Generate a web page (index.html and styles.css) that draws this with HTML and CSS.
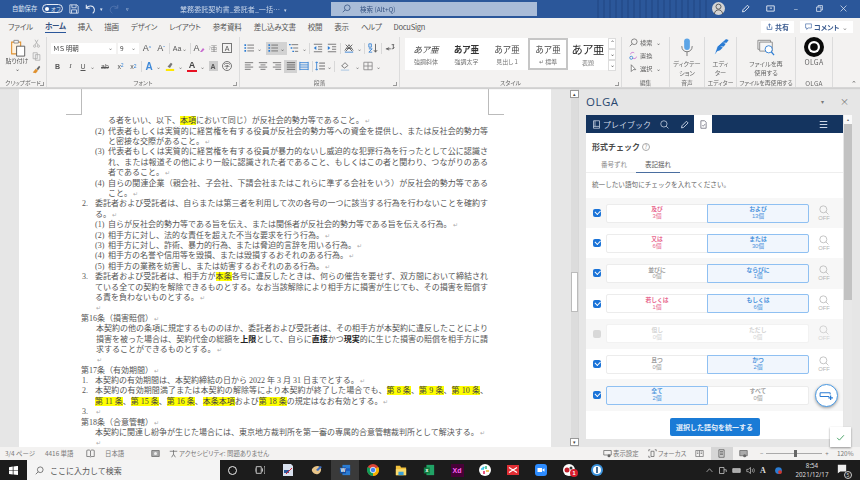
FILE: index.html
```html
<!DOCTYPE html>
<html lang="ja">
<head>
<meta charset="utf-8">
<title>業務委託契約書</title>
<link rel="stylesheet" href="styles.css">
</head>
<body>
<svg class="defs" aria-hidden="true">
  <symbol id="mag" viewBox="0 0 12 12"><circle cx="7" cy="5" r="3.8" fill="none" stroke="currentColor"/><path d="M4.2 7.8 1 11" stroke="currentColor" fill="none"/></symbol>
  <symbol id="magr" viewBox="0 0 12 12"><circle cx="5.2" cy="5.2" r="4.2" fill="none" stroke="currentColor"/><path d="M8.200 8.200 11.300 11.300" stroke="currentColor" fill="none"/></symbol>
  <symbol id="bul" viewBox="0 0 12 12"><path d="M4 2.5h8M4 6h8M4 9.500h8" stroke="#666"/><path d="M.5 2.500h2M.5 6h2M.5 9.500h2" stroke="#2b7cd3" stroke-width="2"/></symbol>
  <symbol id="mlv" viewBox="0 0 12 12"><path d="M3 2h8M5 6h6M7 10h4" stroke="#666"/><path d="M0 2h2M2 6h2M4 10h2" stroke="#2b7cd3" stroke-width="1.600"/></symbol>
  <symbol id="indl" viewBox="0 0 12 12"><path d="M1 1.500h10M6 4.500h5M6 7.500h5M1 10.500h10" stroke="#666"/><path d="M4 3.500 1 6l3 2.500z" fill="#2b7cd3"/></symbol>
  <symbol id="indr" viewBox="0 0 12 12"><path d="M1 1.500h10M6 4.500h5M6 7.500h5M1 10.500h10" stroke="#666"/><path d="M1 3.500 4 6 1 8.500z" fill="#2b7cd3"/></symbol>
  <symbol id="al" viewBox="0 0 12 12"><path d="M1 2h10M1 4.700h7M1 7.300h10M1 10h7" stroke="#666"/></symbol>
  <symbol id="ac" viewBox="0 0 12 12"><path d="M1 2h10M3 4.700h6M1 7.300h10M3 10h6" stroke="#666"/></symbol>
  <symbol id="ar" viewBox="0 0 12 12"><path d="M1 2h10M4 4.700h7M1 7.300h10M4 10h7" stroke="#666"/></symbol>
  <symbol id="aj" viewBox="0 0 12 12"><path d="M1 2h10M1 4.700h10M1 7.300h10M1 10h10" stroke="#555"/></symbol>
  <symbol id="ad" viewBox="0 0 12 12"><path d="M1 2h10M1 4.700h10M1 7.300h10M1 10h10M1 1v10M11 1v10" stroke="#2b7cd3"/></symbol>
  <symbol id="doc" viewBox="0 0 12 12"><path d="M2.500 1h5l2 2v8h-7zM4.500 7l1.200 1.300L8 5.500" fill="none" stroke="currentColor"/></symbol>
  <symbol id="pen" viewBox="0 0 12 12"><path d="M2 10.500l.6-2.800 6-6 2.200 2.200-6 6z" fill="none" stroke="currentColor" stroke-width="1.200"/></symbol>
</svg>

<div class="screen">
  <header class="titlebar">
    <div class="tb-left">
      <span class="tb-auto">自動保存</span>
      <span class="toggle"><i class="knob"></i><b>オフ</b></span>
      <svg class="ic10" viewBox="0 0 12 12"><path d="M1 1h8.500L11 2.500V11H1zM3.500 1v3.500h5V1M3 11V7h6v4" fill="none" stroke="#dfe6f2"/></svg>
      <svg class="ic12" viewBox="0 0 14 12"><path d="M1.500 1v4h4M1.500 5C4 1.500 10 1.500 11 6.500c.3 1.800-.8 3.500-2 4.500" fill="none" stroke="#e6ecf6" stroke-width="1.200"/></svg>
      <span class="tb-caret">▾</span>
      <svg class="ic10 dim" viewBox="0 0 12 12"><path d="M10.500 1v4h-4M10.500 5C8 1.500 2 2 1.500 6.500c-.2 2 1 3.500 2.500 4.500" fill="none" stroke="#5d7db5" stroke-width="1.200"/></svg>
      <span class="tb-custom">▿</span>
    </div>
    <div class="tb-title">業務委託契約書_委託者_一括… <small>▾</small></div>
    <div class="tb-search"><svg class="ic9" viewBox="0 0 12 12"><use href="#mag"/></svg><span>検索 (Alt+Q)</span></div>
    <div class="tb-right">
      <span class="avatar"><svg viewBox="0 0 14 14"><circle cx="7" cy="5" r="2.700" fill="none" stroke="#555"/><path d="M2.500 13c.5-3.500 2.500-4.500 4.500-4.500s4 1 4.500 4.500" fill="none" stroke="#555"/></svg></span>
      <svg class="ic9 wh" viewBox="0 0 12 12"><use href="#pen"/></svg>
      <svg class="ic9 wh" viewBox="0 0 12 12"><path d="M1 2.500h10v7H1zM5 5.500h3" fill="none" stroke="currentColor" stroke-width="1.200"/></svg>
      <span class="winbtn">–</span>
      <svg class="ic7 wh" viewBox="0 0 12 12"><path d="M1 3.500h7.500V11H1zM3.500 3.500V1H11v7.500H8.500" fill="none" stroke="currentColor" stroke-width="1.300"/></svg>
      <svg class="ic7 wh" viewBox="0 0 12 12"><path d="M1 1l10 10M11 1 1 11" stroke="currentColor" stroke-width="1.200"/></svg>
    </div>
  </header>

  <nav class="tabs">
    <span class="tab t-file">ファイル</span>
    <span class="tab active">ホーム</span>
    <span class="tab">挿入</span>
    <span class="tab">描画</span>
    <span class="tab">デザイン</span>
    <span class="tab">レイアウト</span>
    <span class="tab">参考資料</span>
    <span class="tab">差し込み文書</span>
    <span class="tab">校閲</span>
    <span class="tab">表示</span>
    <span class="tab">ヘルプ</span>
    <span class="tab">DocuSign</span>
    <span class="tabs-right">
      <span class="chip chip-share"><svg class="ic7" viewBox="0 0 12 12"><path d="M2 6v5h8V6M6 8V1.500M3.500 4 6 1.500 8.500 4" fill="none" stroke="#2b579a" stroke-width="1.200"/></svg>共有</span>
      <span class="chip chip-comment"><svg class="ic7" viewBox="0 0 12 12"><path d="M1 1.500h10v7H5L3 11V8.500H1z" fill="none" stroke="#2b579a"/></svg>コメント<em>⌄</em></span>
    </span>
  </nav>

  <section class="ribbon">
    <div class="rg rg-clip">
      <div class="rg-body clip-body">
        <div class="paste">
          <svg viewBox="0 0 18 20"><path d="M2.500 3.500h10v13h-10z" fill="#fff3e0" stroke="#e0912f" stroke-width="1.200"/><path d="M5 1.500h5v3H5z" fill="#f6f6f6" stroke="#888"/><path d="M8 8h9v11H8z" fill="#fff" stroke="#555"/></svg>
          <span>貼り付け</span><small>⌄</small>
        </div>
        <div class="clip-tools">
          <svg viewBox="0 0 12 12"><path d="M4 1l4 7M8 1 4 8" stroke="#aaa"/><circle cx="3.500" cy="9.500" r="1.500" fill="none" stroke="#aaa"/><circle cx="8.500" cy="9.500" r="1.500" fill="none" stroke="#aaa"/></svg>
          <svg viewBox="0 0 12 12"><path d="M1.500 1h5.500v8h-5.500zM4.500 3.500h6V11h-6z" fill="#f2f2f2" stroke="#aaa"/></svg>
          <svg viewBox="0 0 12 12"><path d="M1 10l4-5 3 2.500L5 11z" fill="#e0912f"/><path d="M6 5l3.500-4 1.500 1.500L8 7z" fill="#666"/></svg>
        </div>
      </div>
      <div class="rg-label">クリップボード<i class="launch"></i></div>
    </div>

    <div class="rg rg-font">
      <div class="rg-body">
        <div class="row">
          <span class="field f-name">ＭＳ 明朝<em>⌄</em></span>
          <span class="field f-size">9<em>⌄</em></span>
          <span class="ib w14 big">A<sup>^</sup></span>
          <span class="ib w14 big">A<sup>ˇ</sup></span>
          <i class="sep"></i>
          <span class="ib w18">Aa<small>⌄</small></span>
          <i class="sep"></i>
          <span class="ib w14 big">A<svg class="mini" viewBox="0 0 6 6"><path d="M1 5l3-4 1.500 1.500L3 5z" fill="#c86bd0"/></svg></span>
          <span class="ib w14 ruby"><small>ｱ</small>亜</span>
          <span class="ib w14"><b class="boxa">A</b></span>
        </div>
        <div class="row r2">
          <span class="ib w13 bold">B</span>
          <span class="ib w13 ital">I</span>
          <span class="ib w12 und">U</span>
          <span class="ib w7 car">⌄</span>
          <span class="ib w18 strike">ab</span>
          <span class="ib w13">x<sub>2</sub></span>
          <span class="ib w13">x<sup>2</sup></span>
          <i class="sep"></i>
          <span class="ib w12 abig blue">A</span>
          <span class="ib w7 car">⌄</span>
          <span class="ib w15"><svg class="ic10" viewBox="0 0 12 12"><path d="M3 7l4-5 2 1.500L6 8.500z" fill="#777"/><path d="M1 9.500h10V12H1z" fill="#ffe800"/></svg></span>
          <span class="ib w7 car">⌄</span>
          <span class="ib redline">A</span>
          <span class="ib w7 car">⌄</span>
          <span class="ib w14"><b class="shade">A</b></span>
          <span class="ib w14"><b class="circa">字</b></span>
        </div>
      </div>
      <div class="rg-label">フォント<i class="launch"></i></div>
    </div>

    <div class="rg rg-para">
      <div class="rg-body">
        <div class="row">
          <span class="ib w14"><svg class="ic10" viewBox="0 0 12 12"><use href="#bul"/></svg></span><span class="ib w7 car">⌄</span>
          <span class="selbox"><svg class="ic10" viewBox="0 0 12 12"><use href="#bul"/></svg><small>⌄</small></span>
          <span class="ib w14"><svg class="ic10" viewBox="0 0 12 12"><use href="#mlv"/></svg></span><span class="ib w7 car">⌄</span>
          <i class="sep"></i>
          <span class="ib w14"><svg class="ic10" viewBox="0 0 12 12"><use href="#indl"/></svg></span>
          <span class="ib w14"><svg class="ic10" viewBox="0 0 12 12"><use href="#indr"/></svg></span>
          <i class="sep"></i>
          <span class="ib w14"><svg class="ic10" viewBox="0 0 12 12"><path d="M1 9 6 2l5 7M3 6.500h6M2 2l8 8M10 2l-8 8" fill="none" stroke="#555"/><path d="M1 11h10" stroke="#2b7cd3"/></svg></span><span class="ib w7 car">⌄</span>
          <i class="sep"></i>
          <span class="ib w14"><svg class="ic10" viewBox="0 0 12 12"><path d="M1 1h3v4H1zM1 7h4L1 11h4" fill="none" stroke="#2b7cd3"/><path d="M9 1v10M7 8.500 9 11l2-2.500" fill="none" stroke="#555"/></svg></span>
          <i class="sep"></i>
          <span class="ib w14"><svg class="ic10" viewBox="0 0 12 12"><path d="M1 7h6M10 2v5M8 2h3M5 5.500 2 7l3 1.500M8 7c2 0 3-1 3-2" fill="none" stroke="#555"/></svg></span>
        </div>
        <div class="row r2">
          <span class="ib w14"><svg class="ic10" viewBox="0 0 12 12"><use href="#al"/></svg></span>
          <span class="ib w14"><svg class="ic10" viewBox="0 0 12 12"><use href="#ac"/></svg></span>
          <span class="ib w14"><svg class="ic10" viewBox="0 0 12 12"><use href="#ar"/></svg></span>
          <span class="selbox sb-just"><svg class="ic10" viewBox="0 0 12 12"><use href="#aj"/></svg></span>
          <span class="ib w14"><svg class="ic10" viewBox="0 0 12 12"><use href="#ad"/></svg></span>
          <i class="sep"></i>
          <span class="ib w12"><svg class="ic10" viewBox="0 0 12 12"><path d="M5 2.500h7M5 6h7M5 9.500h7" stroke="#555"/><path d="M2 1v10M.5 2.500 2 1l1.500 1.500M.5 9.500 2 11l1.500-1.500" fill="none" stroke="#2b7cd3"/></svg></span><span class="ib w7 car">⌄</span>
          <i class="sep"></i>
          <span class="ib w18"><svg class="ic10" viewBox="0 0 12 12"><path d="M2 6l4-4 3.500 3.500-4 3z" fill="none" stroke="#666"/><path d="M1 10h10v2H1z" fill="#c8d8e8"/></svg></span><span class="ib w7 car">⌄</span>
          <span class="ib w14"><svg class="ic10" viewBox="0 0 12 12"><path d="M1 1.500h10v9H1zM6 1.500v9M1 6h10" fill="none" stroke="#888"/></svg></span><span class="ib w7 car">⌄</span>
        </div>
      </div>
      <div class="rg-label">段落<i class="launch"></i></div>
    </div>

    <div class="rg rg-style">
      <div class="rg-body style-body">
        <div class="gallery">
          <div class="st s1"><b class="it">あア亜</b><span>強調斜体</span></div>
          <div class="st s2"><b class="bd">あア亜</b><span>強調太字</span></div>
          <div class="st s3"><b>あア亜</b><span>見出し 1</span></div>
          <div class="st s4"><b>あア亜</b><span>↵ 標準</span></div>
          <div class="st s5"><b class="lg">あア亜</b><span>表題</span></div>
        </div>
        <div class="gal-sb"><i>⌃</i><i>⌄</i><i>⌄</i></div>
      </div>
      <div class="rg-label">スタイル<i class="launch"></i></div>
    </div>

    <div class="rg rg-edit">
      <div class="rg-body edit-body">
        <span class="ei"><svg class="ic9" viewBox="0 0 12 12"><use href="#mag"/></svg>検索 <small>⌄</small></span>
        <span class="ei"><svg class="ic9" viewBox="0 0 12 12"><path d="M2 4.500a3 3 0 0 1 5-2M10 7.500a3 3 0 0 1-5 2" fill="none" stroke="#c86bd0"/><circle cx="3" cy="9" r="2" fill="none" stroke="#2b7cd3"/></svg>置換</span>
        <span class="ei"><svg class="ic9" viewBox="0 0 12 12"><path d="M3 1v9l2.500-2.500 3.500 0z" fill="#fff" stroke="#666"/></svg>選択 <small>⌄</small></span>
      </div>
      <div class="rg-label">編集</div>
    </div>

    <div class="rg rg-voice">
      <div class="rg-body big-body">
        <svg class="bigic" viewBox="0 0 18 20"><rect x="6" y="0.500" width="6" height="12" rx="3" fill="#5ba4e6"/><path d="M3.500 8.500c0 4 2.500 6 5.500 6s5.500-2 5.500-6M9 14.500V19" fill="none" stroke="#777"/></svg>
        <span>ディクテー<br>ション</span>
      </div>
      <div class="rg-label">音声</div>
    </div>

    <div class="rg rg-editor">
      <div class="rg-body big-body">
        <svg class="bigic" viewBox="0 0 18 20"><path d="M2 18 5 9l9-8 3 1-2 3-4 0 3 1-2 3h-4l3 1-3 3-3 1z" fill="#2b7cd3"/><path d="M2 18 5 9l9-8M5 15h3" fill="none" stroke="#fff" stroke-width=".7"/></svg>
        <span>エディ<br>ター</span>
      </div>
      <div class="rg-label">エディター</div>
    </div>

    <div class="rg rg-reuse">
      <div class="rg-body big-body">
        <svg class="bigic" viewBox="0 0 20 20"><path d="M1 2h14v10H1z" fill="#eee" stroke="#888"/><path d="M3 4h14v10H3z" fill="#f6f6f6" stroke="#888"/><circle cx="13" cy="12" r="4" fill="#fff" stroke="#2b7cd3"/><path d="M16 15l3 3.500" stroke="#2b7cd3" stroke-width="1.300"/></svg>
        <span>ファイルを再<br>使用する</span>
      </div>
      <div class="rg-label">ファイルを再使用する</div>
    </div>

    <div class="rg rg-olga">
      <div class="rg-body big-body olga-body">
        <svg class="olga-logo" viewBox="0 0 20 20"><circle cx="10" cy="10" r="10" fill="#0a0a0a"/><circle cx="10" cy="10" r="6" fill="#fff"/><circle cx="10" cy="10" r="3.800" fill="#0a0a0a"/></svg>
        <span class="olga-t">OLGA</span>
      </div>
      <div class="rg-label lat">OLGA</div>
    </div>
    <i class="collapse">⌃</i>
  </section>

  <main class="main">
    <div class="docarea">
      <div class="page">
        <i class="crop crop-l"></i><i class="crop crop-r"></i>
        <div class="l p2">る者をいい、以下、<mark>本項</mark>において同じ）が反社会的勢力等であること。<i class="rt">↵</i></div>
        <div class="l p1 j"><span class="n">(2)</span>代表者もしくは実質的に経営権を有する役員が反社会的勢力等への資金を提供し、または反社会的勢力等</div>
        <div class="l p2">と密接な交際があること。<i class="rt">↵</i></div>
        <div class="l p1 j"><span class="n">(3)</span>代表者もしくは実質的に経営権を有する役員が暴力的ないし威迫的な犯罪行為を行ったとして公に認識さ</div>
        <div class="l p2 j">れ、または報道その他により一般に認識された者であること、もしくはこの者と関わり、つながりのある</div>
        <div class="l p2">者であること。<i class="rt">↵</i></div>
        <div class="l p1 j"><span class="n">(4)</span>自らの関連企業（親会社、子会社、下請会社またはこれらに準ずる会社をいう）が反社会的勢力等である</div>
        <div class="l p2">こと。<i class="rt">↵</i></div>
        <div class="l p0 j"><span class="n0">2.</span>委託者および受託者は、自らまたは第三者を利用して次の各号の一つに該当する行為を行わないことを確約す</div>
        <div class="l p3">る。<i class="rt">↵</i></div>
        <div class="l p1"><span class="n">(1)</span>自らが反社会的勢力等である旨を伝え、または関係者が反社会的勢力等である旨を伝える行為。<i class="rt">↵</i></div>
        <div class="l p1"><span class="n">(2)</span>相手方に対し、法的な責任を超えた不当な要求を行う行為。<i class="rt">↵</i></div>
        <div class="l p1"><span class="n">(3)</span>相手方に対し、詐術、暴力的行為、または脅迫的言辞を用いる行為。<i class="rt">↵</i></div>
        <div class="l p1"><span class="n">(4)</span>相手方の名誉や信用等を毀損、または毀損するおそれのある行為。<i class="rt">↵</i></div>
        <div class="l p1"><span class="n">(5)</span>相手方の業務を妨害し、または妨害するおそれのある行為。<i class="rt">↵</i></div>
        <div class="l p0 j"><span class="n0">3.</span>委託者および受託者は、相手方が<mark>本条</mark>各号に違反したときは、何らの催告を要せず、双方間において締結され</div>
        <div class="l p3 j">ている全ての契約を解除できるものとする。なお当該解除により相手方に損害が生じても、その損害を賠償す</div>
        <div class="l p3">る責を負わないものとする。<i class="rt">↵</i></div>
        <div class="l p3"><i class="rt">↵</i></div>
        <div class="l pa">第16条（損害賠償）<i class="rt">↵</i></div>
        <div class="l p4 j">本契約の他の条項に規定するもののほか、委託者および受託者は、その相手方が本契約に違反したことにより</div>
        <div class="l p4 j">損害を被った場合は、契約代金の総額を<b>上限</b>として、自らに<b>直接</b>かつ<b>現実</b>的に生じた損害の賠償を相手方に請</div>
        <div class="l p4">求することができるものとする。<i class="rt">↵</i></div>
        <div class="l p4"><i class="rt">↵</i></div>
        <div class="l pa">第17条（有効期間）<i class="rt">↵</i></div>
        <div class="l p0"><span class="n0">1.</span>本契約の有効期間は、本契約締結の日から 2022 年 3 月 31 日までとする。<i class="rt">↵</i></div>
        <div class="l p0 j"><span class="n0">2.</span>本契約の有効期間満了または本契約の解除等により本契約が終了した場合でも、<mark>第 8 条</mark>、<mark>第 9 条</mark>、<mark>第 10 条</mark>、</div>
        <div class="l p3"><mark>第 11 条</mark>、<mark>第 15 条</mark>、<mark>第 16 条</mark>、<mark>本条本項</mark>および<mark>第 18 条</mark>の規定はなお有効とする。<i class="rt">↵</i></div>
        <div class="l p0"><span class="n0">3.</span><i class="rt">↵</i></div>
        <div class="l pa">第18条（合意管轄）<i class="rt">↵</i></div>
        <div class="l p3">本契約に関連し紛争が生じた場合には、東京地方裁判所を第一審の専属的合意管轄裁判所として解決する。<i class="rt">↵</i></div>
        <div class="l p3"><i class="rt">↵</i></div>
      </div>
      <div class="doc-gutter"></div>
      <div class="doc-sb">
        <span class="sb-btn">▴</span>
        <span class="sb-thumb"></span>
        <span class="sb-btn">▾</span>
      </div>
    </div>

    <aside class="pane">
      <div class="pane-head"><span class="pane-title">OLGA</span><span class="pane-dd">▾</span><span class="pane-x">×</span></div>
      <div class="pane-body">
        <div class="panel">
          <div class="ph">
            <svg class="ic9" viewBox="0 0 12 12"><path d="M2 1h8v10H2zM2 8.500h8M4 1v7.500" fill="none" stroke="currentColor"/></svg>
            <span class="ph-t">プレイブック</span>
            <svg class="ic9 ph-s" viewBox="0 0 12 12"><use href="#magr"/></svg>
            <svg class="ic9 ph-p" viewBox="0 0 12 12"><use href="#pen"/></svg>
            <span class="ph-tab"><svg class="ic9" viewBox="0 0 12 12"><use href="#doc"/></svg></span>
            <svg class="ic9 ph-m" viewBox="0 0 12 12"><path d="M1 2h10M1 6h10M1 10h10" stroke="currentColor" stroke-width="1.400"/></svg>
          </div>
          <div class="pc">
            <h2 class="pc-h">形式チェック <span class="qm">?</span></h2>
            <div class="pc-tabs"><span class="pt">番号ずれ</span><span class="pt on">表記揺れ</span></div>
            <p class="pc-note">統一したい語句にチェックを入れてください。</p>
            <div class="terms">
              <div class="term alt">
                <i class="cb"></i>
                <div class="pair"><div class="side pink"><b>及び</b><span>3個</span></div><div class="side sel"><b>および</b><span>13個</span></div></div>
                <div class="srch"><svg viewBox="0 0 12 12"><use href="#magr"/></svg><span>OFF</span></div>
              </div>
              <div class="term">
                <i class="cb"></i>
                <div class="pair"><div class="side pink"><b>又は</b><span>6個</span></div><div class="side sel"><b>または</b><span>30個</span></div></div>
                <div class="srch"><svg viewBox="0 0 12 12"><use href="#magr"/></svg><span>OFF</span></div>
              </div>
              <div class="term alt">
                <i class="cb"></i>
                <div class="pair"><div class="side"><b>並びに</b><span>0個</span></div><div class="side sel"><b>ならびに</b><span>1個</span></div></div>
                <div class="srch"><svg viewBox="0 0 12 12"><use href="#magr"/></svg><span>OFF</span></div>
              </div>
              <div class="term">
                <i class="cb"></i>
                <div class="pair"><div class="side pink"><b>若しくは</b><span>1個</span></div><div class="side sel"><b>もしくは</b><span>6個</span></div></div>
                <div class="srch"><svg viewBox="0 0 12 12"><use href="#magr"/></svg><span>OFF</span></div>
              </div>
              <div class="term alt off">
                <i class="cb"></i>
                <div class="pair"><div class="side"><b>但し</b><span>0個</span></div><div class="side"><b>ただし</b><span>0個</span></div></div>
                <div class="srch"><svg viewBox="0 0 12 12"><use href="#magr"/></svg><span>OFF</span></div>
              </div>
              <div class="term">
                <i class="cb"></i>
                <div class="pair"><div class="side"><b>且つ</b><span>0個</span></div><div class="side sel"><b>かつ</b><span>2個</span></div></div>
                <div class="srch"><svg viewBox="0 0 12 12"><use href="#magr"/></svg><span>OFF</span></div>
              </div>
              <div class="term alt tall">
                <i class="cb"></i>
                <div class="pair"><div class="side sel first"><b>全て</b><span>2個</span></div><div class="side plain"><b>すべて</b><span>0個</span></div></div>
                <div class="srch"></div>
              </div>
            </div>
            <div class="pc-foot"><button class="unify">選択した語句を統一する</button></div>
          </div>
          <span class="fab"><svg viewBox="0 0 16 12"><path d="M1 3h11M1 7h10M1 3v4M12 3v2" fill="none" stroke="#2b7cd3" stroke-width="1.100"/><path d="M12.500 6v5M10 8.500h5" stroke="#2b7cd3" stroke-width="1.300"/></svg></span>
        </div>
        <div class="pane-sb"><span class="psb-btn">▴</span><span class="psb-thumb"></span></div>
        <span class="okbox"><svg viewBox="0 0 12 12"><path d="M1.500 6.500 4.500 9.500 10.500 3" fill="none" stroke="#3b9b5b" stroke-width="1.200"/></svg></span>
      </div>
    </aside>
  </main>

  <footer class="status">
    <span class="s-a">3/4 ページ</span>
    <span class="s-b">4416 単語</span>
    <svg class="ic9 s-c" viewBox="0 0 12 12"><path d="M1 2c2-1 4-1 5 .5C7 1 9 1 11 2v8H7l-1 1-1-1H1zM6 2.500V10" fill="none" stroke="#666"/></svg>
    <span class="s-d">日本語</span>
    <svg class="ic9 s-e" viewBox="0 0 12 12"><path d="M1 2h10v8H1z" fill="#aaa" stroke="#666"/><circle cx="6" cy="6" r="2" fill="#eee"/></svg>
    <span class="s-f"><svg class="ic9" viewBox="0 0 12 12"><path d="M1 3h10M6 1.500V7M3.500 11 6 7l2.500 4" fill="none" stroke="#666"/></svg>アクセシビリティ: 問題ありません</span>
    <span class="s-g"><svg class="ic9" viewBox="0 0 12 12"><path d="M1 2h10v6H1z" fill="none" stroke="#666"/><circle cx="8" cy="9" r="2" fill="#666"/></svg>表示設定</span>
    <span class="s-h"><svg class="ic9" viewBox="0 0 12 12"><path d="M1 3V1h2M9 1h2v2M1 9v2h2M4 3h4v7H4z" fill="none" stroke="#666"/></svg>フォーカス</span>
    <span class="s-v"><svg class="ic9" viewBox="0 0 12 12"><path d="M1 2h10v8H1zM6 2v8M2.500 4h2M7.500 4h2M2.500 6h2M7.500 6h2" fill="none" stroke="#777"/></svg></span>
    <span class="s-v on"><svg class="ic9" viewBox="0 0 12 12"><path d="M2.500 1h7v10h-7zM4 3.500h4M4 5.500h4M4 7.500h4" fill="none" stroke="#555"/></svg></span>
    <span class="s-v"><svg class="ic9" viewBox="0 0 12 12"><path d="M1 2h10v7H1z" fill="#aaa" stroke="#666"/><circle cx="7.500" cy="9" r="2" fill="#666"/></svg></span>
    <span class="s-z"><b>−</b><span class="z-track"><i class="z-knob"></i></span><b>+</b></span>
    <span class="s-p">120%</span>
  </footer>

  <div class="taskbar">
    <svg class="start" viewBox="0 0 12 12"><path d="M0 1.500 5 .8V5.700H0zM6 .6l6-.8V5.700H6zM0 6.300h5V11.200L0 10.500zM6 6.300h6V12l-6-.8z" fill="#fff"/></svg>
    <div class="tsearch"><svg class="ic9" viewBox="0 0 12 12"><use href="#mag"/></svg>ここに入力して検索</div>
    <div class="tslots">
      <span class="ts w25"><i class="cortana"></i></span>
      <span class="ts w27"><svg class="ic10" viewBox="0 0 12 12"><path d="M1.500 2h6v8h-6zM0 4v4M9 4v4M11 2h1v8h-1" fill="none" stroke="#ddd"/></svg></span>
      <span class="ts"><svg class="ic12" viewBox="0 0 12 12"><path d="M1 0h8l2 2v10H1z" fill="#d8e0ee"/><path d="M2 6h5v3H2z" fill="#2b579a"/><path d="M4 10 10 4" stroke="#d23"/></svg></span>
      <span class="ts w30"><svg class="ic12" viewBox="0 0 12 12"><path d="M1 5c2-3 6-4 8-2s1 6-2 7-7-2-6-5z" fill="#e8c58a"/><path d="M5 6l4-4 2 1-4 4z" fill="#3f6fc0"/></svg></span>
      <span class="ts tw"><svg class="ic12" viewBox="0 0 14 14"><path d="M4 1h9v12H4z" fill="#2b7cd3"/><path d="M4 5h9v3H4z" fill="#185abd"/><path d="M1 4h7v7H1z" fill="#124a9c"/><text x="4.500" y="9.500" class="wlet">W</text></svg></span>
      <span class="ts"><svg class="ic12" viewBox="0 0 24 24"><circle cx="12" cy="12" r="12" fill="#db4437"/><path d="M12 12 22.400 6A12 12 0 0 1 12 24z" fill="#f4b400"/><path d="M12 12 12 24A12 12 0 0 1 1.600 6z" fill="#0f9d58"/><circle cx="12" cy="12" r="5.500" fill="#4285f4" stroke="#fff" stroke-width="1.500"/></svg></span>
      <span class="ts"><svg class="ic12" viewBox="0 0 14 12"><path d="M1 1h5l1 2h6v9H1z" fill="#f3c23c"/><path d="M1 5h12v7H1z" fill="#fbdc6e"/><path d="M4 8h6v4H4z" fill="#3ba1da"/></svg></span>
      <span class="ts"><svg class="ic12" viewBox="0 0 14 14"><path d="M4 1h9v12H4z" fill="#21a366"/><path d="M1 4h7v7H1z" fill="#107c41"/><text x="4.500" y="9.500" class="wlet">x</text></svg></span>
      <span class="ts"><span class="xd">Xd</span></span>
      <span class="ts"><svg class="ic12" viewBox="0 0 12 12"><circle cx="6" cy="6" r="6" fill="#fff"/><path d="M2 5h3M3.500 3.500h2" stroke="#36c5f0" stroke-width="1.500"/><path d="M7 2v3" stroke="#2eb67d" stroke-width="1.500"/><path d="M10 7H7" stroke="#ecb22e" stroke-width="1.500"/><path d="M5 10V7" stroke="#e01e5a" stroke-width="1.500"/></svg></span>
      <span class="ts"><svg class="ic12" viewBox="0 0 12 12"><path d="M0 1h12v10H0z" fill="#e02e34"/><path d="M2 3.500 6 6l4-2.500M2 8.500 6 6l4 2.500" fill="none" stroke="#fff" stroke-width="1.300"/></svg></span>
      <span class="ts"><svg class="ic12" viewBox="0 0 12 12"><rect width="12" height="12" rx="3" fill="#2d8cff"/><path d="M2.500 4h4.500v4H2.500zM7.500 5.500l2-1.300v3.600l-2-1.300z" fill="#fff"/></svg></span>
      <span class="ts tbadge"><svg class="ic12" viewBox="0 0 12 12"><circle cx="6" cy="6" r="6" fill="#fff"/><circle cx="4" cy="6" r="2.500" fill="#c21f2c"/><circle cx="8" cy="4" r="1.500" fill="#333"/></svg><b class="bdg">1</b></span>
      <span class="ts"><svg class="ic12" viewBox="0 0 12 12"><circle cx="6" cy="6" r="6" fill="#3b92dc"/><circle cx="6" cy="6" r="4" fill="#fff"/><path d="M6 3v6" stroke="#174a7c" stroke-width="1.600"/></svg></span>
    </div>
    <div class="tray">
      <svg class="ic7" viewBox="0 0 12 12"><path d="M1 8.500 6 3l5 5.500" fill="none" stroke="#ccc" stroke-width="1.200"/></svg>
      <svg class="ic9" viewBox="0 0 12 12"><path d="M2 2h6v8H2zM8 5h3v3" fill="none" stroke="#ccc"/></svg>
      <svg class="ic9" viewBox="0 0 12 12"><path d="M1 3.500h10v5H1z" fill="#aaa" stroke="#ccc"/></svg>
      <svg class="ic9" viewBox="0 0 12 12"><path d="M1 4.500h2L6 2v8L3 7.500H1zM8 4c1 1 1 3 0 4M10 3c1.500 2 1.500 4 0 6" fill="none" stroke="#bbb"/></svg>
      <span class="ime">A</span>
      <svg class="ic9 tray-dot" viewBox="0 0 12 12"><circle cx="6" cy="6" r="4.500" fill="#2b7cd3"/><circle cx="8" cy="8" r="2.500" fill="#d5352b"/></svg>
      <span class="clock">8:54<br>2021/12/17</span>
      <span class="notif"><svg class="ic10" viewBox="0 0 12 12"><path d="M1 1h10v8H4l-3 2z" fill="#eee"/></svg><b>5</b></span>
    </div>
  </div>
</div>
</body>
</html>
```

FILE: styles.css
```css
* { box-sizing: border-box; }
html, body { margin: 0; padding: 0; }
body {
  width: 860px; height: 480px; overflow: hidden; background: #e6e6e6;
  font-family: "Noto Sans CJK JP", "Noto Sans", sans-serif; color: #555;
}
.defs { width: 0; height: 0; position: absolute; }
.screen { width: 860px; height: 480px; display: flex; flex-direction: column; overflow: hidden; filter: blur(.32px); }
i, em { font-style: normal; }
svg { display: block; flex: none; }
.ic7 { width: 7px; height: 7px; }
.ic9 { width: 9px; height: 9px; }
.ic10 { width: 10px; height: 10px; }
.ic12 { width: 12px; height: 12px; }
.wh { color: #e6ecf6; }
.dim { opacity: .8; }

/* title bar */
.titlebar { height: 17.500px; flex: none; background: #2b579a; display: flex; align-items: center; color: #dbe4f2; font-size: 6.500px; position: relative; }
.tb-left { width: 178px; display: flex; align-items: center; gap: 6px; padding-left: 12px; }
.tb-auto { width: 26px; font-size: 6.300px; white-space: nowrap; margin-right: -2px; font-feature-settings: "palt"; }
.toggle { width: 21px; height: 9px; border: 1px solid #e6ecf6; border-radius: 5px; display: flex; align-items: center; gap: 2px; padding-left: 2px; }
.toggle b { font-weight: 400; font-size: 5px; white-space: nowrap; }
.knob { width: 4px; height: 4px; border-radius: 50%; background: #fff; }
.tb-caret, .tb-custom { font-size: 5px; margin-left: -3px; }
.tb-custom { margin-left: 1px; }
.tb-title { width: 153px; font-size: 7.100px; white-space: nowrap; padding-left: 2px; color: #c9d6ea; }
.tb-title small { font-size: 5px; margin-left: 2px; }
.tb-search { width: 206px; height: 14px; background: #a9bcd8; display: flex; align-items: center; gap: 9px; padding-left: 11px; color: #33507f; font-size: 6.500px; }
.tb-right {
  flex: 1; height: 17.500px; display: flex; align-items: center; padding-left: 175px; gap: 16.500px;
  background: repeating-linear-gradient(90deg, rgba(20,50,100,.22) 0 2px, transparent 2px 6px) 60px 0 / 110px 100% no-repeat;
}
.avatar { width: 13px; height: 13px; border-radius: 50%; background: #d4d4d4; margin-right: -1px; }
.winbtn { width: 9px; font-size: 8px; text-align: center; margin-right: -1px; }

/* tabs */
.tabs { height: 17.500px; flex: none; background: #f3f2f1; display: flex; align-items: center; font-size: 7.500px; letter-spacing: -.25px; color: #555; padding-left: 8px; position: relative; gap: 12px; font-feature-settings: "palt"; }
.tab { white-space: nowrap; line-height: 11px; }
.tab.active { font-weight: 700; color: #33507f; border-bottom: 1.500px solid #2b579a; height: 13px; }
.tabs-right { margin-left: auto; display: flex; gap: 6px; padding-right: 7px; padding-top: 1px; letter-spacing: 0; }
.chip { height: 12px; background: #fff; display: flex; align-items: center; gap: 2px; padding: 0 5px; font-size: 7px; font-weight: 700; color: #3a5a8e; white-space: nowrap; }
.chip-share { width: 33px; }
.chip-comment { width: 53px; }
.chip em { color: #888; margin-left: auto; font-weight: 400; line-height: 6px; }

/* ribbon */
.ribbon { height: 53px; flex: none; background: #f3f2f1; display: flex; border-bottom: 1px solid #d6d6d6; box-shadow: 0 1px 1px #d0d0d0; position: relative; z-index: 2; font-feature-settings: "palt"; }
.rg { display: flex; flex-direction: column; border-right: 1px solid #dcdcdc; margin: 2px 0 0; position: relative; flex: none; }
.rg-body { height: 42px; }
.rg-label { height: 8px; font-size: 5.800px; color: #666; text-align: center; white-space: nowrap; line-height: 8px; }
.rg-label.lat { font-size: 6.500px; letter-spacing: .2px; }
.launch { position: absolute; right: 2px; bottom: 1px; width: 4px; height: 4px; border: 1px solid #999; border-width: 0 1px 1px 0; }
.rg-clip { width: 47px; }
.rg-font { width: 193px; }
.rg-para { width: 160px; }
.rg-style { width: 222px; }
.rg-edit { width: 48px; }
.rg-voice { width: 35px; }
.rg-editor { width: 32px; }
.rg-reuse { width: 59px; }
.rg-olga { width: 37px; }

.clip-body { display: flex; padding: 2px 0 0 4px; }
.paste { width: 26px; display: flex; flex-direction: column; align-items: center; font-size: 6px; line-height: 8px; color: #555; white-space: nowrap; }
.paste svg { width: 17px; height: 18px; margin-bottom: 0; }
.paste small { font-size: 6px; line-height: 7px; }
.clip-tools { display: flex; flex-direction: column; gap: 4px; padding: 0 0 0 2px; }
.clip-tools svg { width: 9px; height: 9px; }

.rg-font .rg-body, .rg-para .rg-body { padding: 5px 0 0 4px; }
.rg-para .rg-body { padding-left: 2px; }
.row { display: flex; align-items: center; height: 12px; font-size: 7px; color: #555; }
.r2 { margin-top: 6px; }
.field { background: #fff; height: 11px; display: flex; align-items: center; justify-content: space-between; font-size: 6.500px; padding: 0 3px 0 2px; color: #444; white-space: nowrap; }
.field em { color: #777; font-size: 6px; line-height: 8px; }
.f-name { width: 65px; margin-right: 2px; }
.f-size { width: 21px; margin-right: 1px; }
.ib { display: flex; align-items: center; justify-content: center; height: 12px; font-size: 7px; color: #555; flex: none; font-family: "Liberation Sans", sans-serif; }
.ib sup { font-size: 5px; line-height: 0; vertical-align: 2px; color: #2b7cd3; }
.ib sub { font-size: 4.500px; line-height: 0; color: #2b7cd3; }
.ib small { font-size: 6px; margin-left: 1px; color: #777; }
.w7 { width: 7px; } .w12 { width: 12px; } .w13 { width: 13px; } .w14 { width: 14px; } .w15 { width: 15px; } .w18 { width: 18px; }
.car { color: #777; font-size: 6px; }
.big { font-size: 9px; }
.abig { font-size: 10px; font-weight: 700; }
.bold { font-weight: 700; }
.ital { font-style: italic; font-family: "Liberation Serif", serif; }
.und { text-decoration: underline; }
.strike { text-decoration: line-through; font-size: 7px; }
.blue { color: #3f89d8; }
.redline { border-bottom: 2px solid #e81123; color: #444; height: 11px; line-height: 9px; font-size: 9px; font-weight: 700; width: 10px; margin: 0 2px 0 3px; }
.mini { width: 6px; height: 6px; margin: 3px 0 0 -1px; }
.ruby { font-size: 6.500px; color: #888; font-family: "Noto Sans CJK JP", sans-serif; }
.ruby small { font-size: 4px; margin: 0; color: #888; }
.boxa { width: 10px; height: 10px; border: 1px solid #777; font-size: 7px; font-weight: 400; display: flex; align-items: center; justify-content: center; }
.shade { width: 9px; height: 10px; background: #ccc; font-size: 7px; display: flex; align-items: center; justify-content: center; }
.circa { width: 10px; height: 10px; border: 1px solid #777; border-radius: 50%; font: 400 6px/8px "Noto Sans CJK JP", sans-serif; text-align: center; }
.sep { width: 1px; height: 11px; background: #d8d8d8; margin: 0 1px; flex: none; }
.selbox { background: #d2d2d2; width: 21px; height: 13px; display: flex; align-items: center; justify-content: center; gap: 2px; margin: 0 0 0 3px; font-size: 6px; color: #666; flex: none; }
.selbox small { font-size: 6px; }
.sb-just { width: 13px; margin: 0; }

.style-body { display: flex; padding: 1px 0 0 5px; }
.gallery { width: 203px; height: 32px; background: #fff; display: flex; }
.st { display: flex; flex-direction: column; align-items: center; font-size: 6px; color: #777; white-space: nowrap; height: 32px; padding-top: 6px; gap: 2px; }
.st b { font-weight: 400; font-size: 8.700px; color: #444; line-height: 12px; height: 12px; }
.st span { line-height: 8px; }
.s1 { width: 42px; }
.s2 { width: 39px; }
.s3 { width: 42px; }
.s4 { width: 40px; border: 2px solid #c6c6c6; background: #fff; padding-top: 4px; }
.s5 { width: 40px; padding-top: 5px; gap: 3px; }
.st .it { font-style: italic; }
.st .bd { font-weight: 700; color: #333; }
.st .lg { font-size: 11.300px; color: #222; line-height: 13px; height: 13px; }
.gal-sb { width: 8px; display: flex; flex-direction: column; margin-left: 0; }
.gal-sb i { height: 11px; background: #fff; border: 1px solid #ddd; font-size: 6px; line-height: 7px; text-align: center; color: #555; }

.edit-body { display: flex; flex-direction: column; gap: 2.500px; padding: 0 0 0 7px; }
.ei { display: flex; align-items: center; gap: 2px; height: 10.500px; font-size: 6.200px; white-space: nowrap; color: #666; }
.ei small { font-size: 6px; margin-left: 2px; }
.big-body { display: flex; flex-direction: column; align-items: center; font-size: 6.200px; line-height: 9px; color: #666; text-align: center; white-space: nowrap; padding-top: 1px; }
.bigic { width: 18px; height: 19px; margin-bottom: 2px; }
.olga-body { padding-top: 0; }
.olga-logo { width: 20px; height: 20px; margin-bottom: 1px; }
.olga-t { font-size: 7px; letter-spacing: .3px; }
.collapse { position: absolute; right: 3px; bottom: 0; font-size: 7px; color: #666; line-height: 8px; }

/* document */
.main { height: 359px; flex: none; display: flex; }
.docarea { width: 578px; display: flex; background: #e6e6e6; padding-left: 19px; }
.page { width: 532px; background: #fff; padding-top: 28.300px; position: relative; overflow: hidden; font-size: 8px; color: #555; }
.crop { position: absolute; top: 0; width: 16px; height: 27px; border-bottom: 1px solid #bbb; }
.crop-l { left: 47px; border-right: 1px solid #bbb; }
.crop-r { left: 469px; border-left: 1px solid #bbb; }
.l { height: 10.400px; line-height: 10.400px; white-space: nowrap; font-family: "Liberation Serif", "Noto Sans CJK JP", sans-serif; font-weight: 400; width: 469px; }
.l.j { text-align: justify; text-align-last: justify; }
.l mark { background: #ffff00; color: #444; }
.l b { font-weight: 700; color: #222; }
.rt { color: #aaa; font-size: 6px; margin-left: 1px; }
.p0 { padding-left: 63px; }
.p1 { padding-left: 76px; }
.p2 { padding-left: 89px; }
.p3 { padding-left: 76px; }
.p4 { padding-left: 77px; }
.pa { padding-left: 62px; }
.n { display: inline-block; width: 13px; font-size: 8px; text-align-last: left; }
.n0 { display: inline-block; width: 13px; text-align-last: left; }
.doc-gutter { width: 20px; }
.doc-sb { width: 7px; background: #dcdcdc; display: flex; flex-direction: column; justify-content: space-between; position: relative; padding: 2px 0 1px; }
.sb-btn { height: 8px; width: 9px; margin-left: -1px; background: #fff; border: 1px solid #999; font-size: 5px; line-height: 6px; text-align: center; color: #444; z-index: 1; }
.sb-thumb { position: absolute; top: 184px; left: 0; width: 7px; height: 40px; background: #fff; border: 1px solid #bbb; }

/* pane */
.pane { width: 282px; background: #e6e6e6; display: flex; flex-direction: column; border-left: 1px solid #d8d8d8; }
.pane-head { height: 27px; display: flex; align-items: center; padding-left: 7px; }
.pane-title { font-family: "Open Sans", "Liberation Sans", sans-serif; font-size: 11.500px; color: #29466f; letter-spacing: .5px; }
.pane-dd { margin-left: auto; font-size: 6px; color: #777; margin-right: 16px; }
.pane-x { font-size: 9px; color: #777; margin-right: 11px; }
.pane-body { display: flex; padding-left: 7px; position: relative; height: 324px; }
.panel { width: 257px; height: 324px; background: #fff; display: flex; flex-direction: column; position: relative; }
.ph { height: 18px; background: #14345f; color: #cdd7e6; display: flex; align-items: center; padding-left: 6px; flex: none; }
.ph-t { font-size: 8px; width: 52px; padding-left: 2px; white-space: nowrap; }
.ph-s { margin-left: 7px; }
.ph-p { margin-left: 11px; }
.ph-tab { width: 18px; height: 18px; margin-left: 5px; background: #fff; color: #667; display: flex; align-items: center; justify-content: center; }
.ph-m { margin-left: 107px; }
.pc { flex: 1; display: flex; flex-direction: column; }
.pc-h { margin: 0; height: 24px; display: flex; align-items: center; gap: 2px; padding: 3px 0 0 6px; font-size: 8px; font-weight: 700; color: #4a4a4a; }
.qm { width: 8px; height: 8px; border: 1px solid #aaa; border-radius: 50%; font-size: 6px; line-height: 6px; text-align: center; font-weight: 400; color: #999; }
.pc-tabs { height: 16px; display: flex; border-bottom: 1px solid #eee; padding-left: 6px; font-size: 6.500px; color: #8a8a8a; flex: none; }
.pt { width: 44px; text-align: center; line-height: 15px; height: 16px; white-space: nowrap; }
.pt.on { color: #555; border-bottom: 1px solid #4a6ea0; }
.pc-note { margin: 0; height: 25px; padding: 7px 0 0 6px; font-size: 6.600px; line-height: 9px; color: #666; white-space: nowrap; flex: none; }
.terms { flex: none; }
.term { height: 30.200px; display: flex; align-items: center; padding-left: 7px; background: #fff; }
.term.alt { background: #f7f7f7; }
.term.tall { height: 32px; }
.cb { width: 8px; height: 8px; border-radius: 2px; background: #1a73d8; flex: none; position: relative; }
.cb::after { content: ""; position: absolute; left: 2px; top: 1px; width: 4px; height: 2.500px; border: solid #fff; border-width: 0 0 1px 1px; transform: rotate(-45deg); }
.pair { width: 203px; height: 19px; margin-left: 5px; display: flex; background: #fff; border: 1px solid #ececec; border-radius: 2px; }
.side { flex: 1; display: flex; flex-direction: column; align-items: center; justify-content: center; font-family: "Liberation Sans", "Noto Sans CJK JP", sans-serif; font-size: 5.800px; line-height: 6.900px; color: #a0a0a0; }
.side b { font-weight: 700; }
.side.pink { color: #e8688f; }
.side.sel { background: #f1f6fd; border: 1px solid #8fc0f2; margin: -1px -1px -1px 0; color: #4d94dc; border-radius: 0 2px 2px 0; }
.side.first { margin: -1px 0 -1px -1px; border-radius: 2px 0 0 2px; }
.srch { width: 30px; display: flex; flex-direction: column; align-items: center; color: #b5b5b5; font-size: 5.800px; line-height: 7px; font-family: "Liberation Sans", sans-serif; }
.srch svg { width: 10px; height: 10px; color: #bbb; }
.term.off .cb { background: #d8d8d8; }
.term.off .cb::after { display: none; }
.term.off .pair { border-color: #f2f2f2; }
.term.off .side, .term.off .srch { color: #d4d4d4; }
.term.off .srch svg { color: #ccc; }
.pc-foot { flex: 1; display: flex; align-items: flex-start; justify-content: center; padding-top: 7px; }
.unify { width: 90px; height: 18px; border: 0; border-radius: 2px; background: #1a7bd6; color: #e6f0fb; font: 700 7px "Noto Sans CJK JP", sans-serif; padding: 0; }
.fab { position: absolute; left: 229px; top: 269px; width: 23px; height: 23px; border-radius: 50%; background: #fff; border: 1px solid #4a9ae4; box-shadow: 0 1px 3px rgba(0,0,0,.35); display: flex; align-items: center; justify-content: center; }
.fab svg { width: 15px; height: 11px; }
.pane-sb { width: 8px; margin-left: 1px; background: #e8e8e8; display: flex; flex-direction: column; flex: none; }
.psb-btn { height: 9px; background: #fafafa; font-size: 4px; line-height: 8px; text-align: center; color: #666; }
.psb-thumb { height: 176px; background: #c2c2c2; }
.okbox { position: absolute; left: 251px; top: 312px; width: 21px; height: 20px; background: #fff; box-shadow: 0 1px 2px rgba(0,0,0,.4); display: flex; align-items: center; justify-content: center; }
.okbox svg { width: 9px; height: 9px; }

/* status bar */
.status { height: 13px; flex: none; background: #f3f2f1; display: flex; align-items: center; font-size: 6.400px; color: #777; white-space: nowrap; padding-left: 5px; font-feature-settings: "palt"; }
.status svg { margin-right: 1px; }
.status span { display: flex; align-items: center; }
.s-a { width: 40px; }
.s-b { width: 41px; }
.s-c { margin-right: 10px !important; }
.s-d { width: 40px; }
.s-e { margin: 0 9px 0 6px !important; }
.s-f { width: 434px; }
.s-g { width: 45px; }
.s-h { width: 41px; }
.s-v { width: 22px; height: 13px; justify-content: center; }
.s-v.on { background: #d6d6d6; }
.s-z { width: 82px; padding-left: 5px; gap: 3px; }
.s-z b { font-weight: 400; font-size: 6px; }
.z-track { width: 56px; height: 1px; background: #aaa; position: relative; }
.z-knob { position: absolute; left: 28px; top: -3px; width: 3px; height: 7px; background: #666; }
.s-p { font-size: 6.400px; }

/* taskbar */
.taskbar { height: 20px; flex: none; background: #1c1c1c; display: flex; align-items: center; }
.start { width: 9px; height: 9px; margin: 0 9px 0 9px; }
.tsearch { width: 193px; height: 20px; background: #f4f4f4; display: flex; align-items: center; gap: 6px; padding-left: 8px; font-size: 8px; color: #555; white-space: nowrap; }
.tslots { display: flex; height: 20px; width: 466px; align-items: center; }
.ts { width: 28px; height: 20px; display: flex; align-items: center; justify-content: center; flex: none; position: relative; }
.w25 { width: 25px; } .w27 { width: 29px; } .w30 { width: 29px; }
.tw { background: #3a3a3a; }
.cortana { width: 9px; height: 9px; border: 1.200px solid #eee; border-radius: 50%; }
.wlet { font: 700 6px "Liberation Sans", sans-serif; fill: #fff; text-anchor: middle; }
.xd { width: 13px; height: 13px; background: #470137; color: #ff61f6; font: 700 7px "Liberation Sans", sans-serif; text-align: center; line-height: 13px; }
.bdg { position: absolute; left: 15px; top: 9px; width: 8px; height: 8px; border-radius: 50%; background: #d81e2c; color: #fff; font: 700 5.500px/8px "Liberation Sans", sans-serif; text-align: center; }
.tray { flex: 1; display: flex; align-items: center; gap: 5px; color: #ccc; padding-left: 20px; }
.ime { font: 700 8px "Liberation Serif", serif; color: #ddd; width: 6px; text-align: center; }
.tray-dot { margin-left: 3px; }
.clock { font: 6.200px/9px "Noto Sans", sans-serif; color: #ddd; text-align: center; width: 40px; margin-left: 4px; white-space: nowrap; }
.notif { position: relative; width: 12px; height: 12px; }
.notif b { position: absolute; right: -3px; bottom: -3px; width: 8px; height: 8px; border: 1px solid #ccc; border-radius: 50%; font: 400 5px/6px "Liberation Sans", sans-serif; text-align: center; background: #222; }
```
